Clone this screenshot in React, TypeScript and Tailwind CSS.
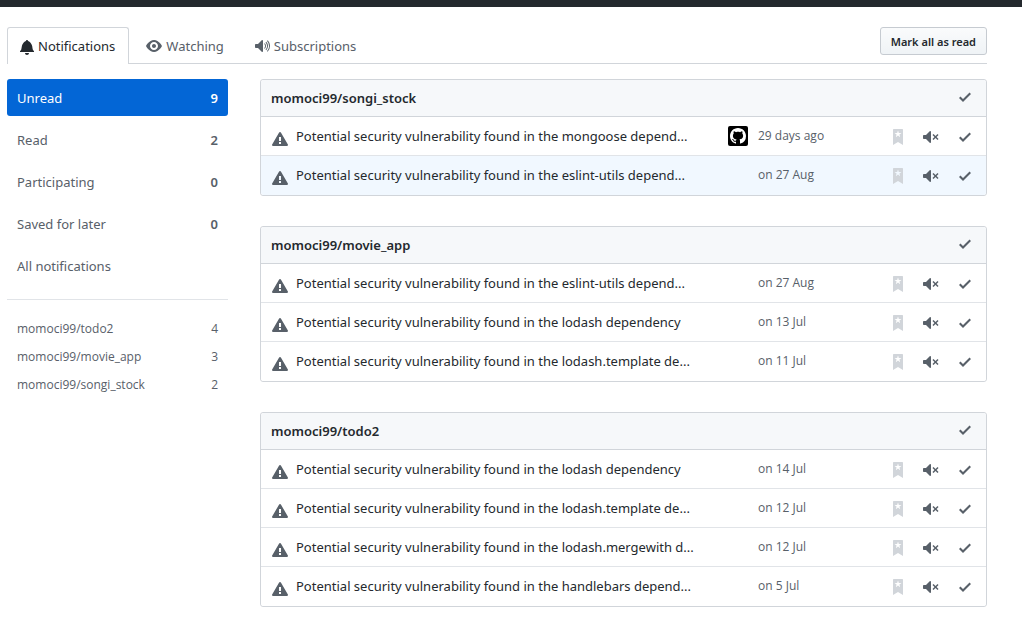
import type { ReactNode } from "react";

type Glyph = { width: number; path: string };

const glyphs = {
  bell: {
    width: 14,
    path: "M14 12v1H0v-1l.73-.58c.77-.77.81-2.55 1.19-4.42C2.69 3.23 6 2 6 2c0-.55.45-1 1-1s1 .45 1 1c0 0 3.39 1.23 4.16 5 .38 1.88.42 3.66 1.19 4.42l.66.58H14zm-7 4c1.11 0 2-.89 2-2H5c0 1.11.89 2 2 2z",
  },
  eye: {
    width: 16,
    path: "M8.06 2C3 2 0 8 0 8s3 6 8.06 6C13 14 16 8 16 8s-3-6-7.94-6zM8 12c-2.2 0-4-1.78-4-4 0-2.2 1.8-4 4-4 2.22 0 4 1.8 4 4 0 2.22-1.78 4-4 4zm2-4c0 1.11-.89 2-2 2-1.11 0-2-.89-2-2 0-1.11.89-2 2-2 1.11 0 2 .89 2 2z",
  },
  unmute: {
    width: 16,
    path: "M12 8.02c0 1.09-.45 2.09-1.17 2.83l-.67-.67c.55-.56.89-1.31.89-2.16 0-.83-.34-1.59-.89-2.16l.67-.67A3.99 3.99 0 0 1 12 8.02zM7.72 2.28L4 6H2c-.55 0-1 .45-1 1v2c0 .55.45 1 1 1h2l3.72 3.72c.47.47 1.28.14 1.28-.53V2.81C9 2.14 8.19 1.81 7.72 2.28zm5.94.08l-.67.67a6.996 6.996 0 0 1 2.06 4.98c0 1.94-.78 3.7-2.06 4.98l.67.67A7.973 7.973 0 0 0 16 8c0-2.22-.89-4.22-2.34-5.66v.02zm-1.41 1.41l-.69.67a5.05 5.05 0 0 1 1.48 3.58c0 1.39-.56 2.66-1.48 3.56l.69.67A5.971 5.971 0 0 0 14 8c0-1.65-.67-3.16-1.75-4.23z",
  },
  mute: {
    width: 16,
    path: "M8 2.81v10.38c0 .67-.81 1-1.28.53L3 10H1c-.55 0-1-.45-1-1V7c0-.55.45-1 1-1h2l3.72-3.72C7.19 1.81 8 2.14 8 2.81zm7.53 3.22l-1.06-1.06-1.97 1.97-1.97-1.97-1.06 1.06L11.44 8 9.47 9.97l1.06 1.06 1.97-1.97 1.97 1.97 1.06-1.06L13.56 8l1.97-1.97z",
  },
  check: { width: 12, path: "M12 5l-8 8-4-4 1.5-1.5L4 10l6.5-6.5L12 5z" },
  alert: {
    width: 16,
    path: "M8.893 1.5c-.183-.31-.52-.5-.887-.5s-.703.19-.886.5L.138 13.499a.98.98 0 0 0 0 1.001c.193.31.53.501.886.501h13.964c.367 0 .704-.19.877-.5a1.03 1.03 0 0 0 .01-1.002L8.893 1.5zm.133 11.497H6.987v-2.003h2.039v2.003zm0-3.004H6.987V5.987h2.039v4.006z",
  },
  bookmark: {
    width: 10,
    path: "M9 0H1C.27 0 0 .27 0 1v15l5-3.09L10 16V1c0-.73-.27-1-1-1zm-.78 4.25L6.36 5.61l.72 2.16c.06.22-.02.28-.2.17L5 6.6 3.12 7.94c-.19.11-.25.05-.2-.17l.72-2.16-1.86-1.36c-.17-.16-.14-.23.09-.23l2.3-.03.7-2.16h.25l.7 2.16 2.3.03c.23 0 .27.08.09.23h.01z",
  },
} satisfies Record<string, Glyph>;

function Icon({ name, className = "" }: { name: keyof typeof glyphs; className?: string }) {
  const { width, path } = glyphs[name];
  return (
    <svg
      width={width}
      height={16}
      viewBox={`0 0 ${width} 16`}
      fill="currentColor"
      fillRule="evenodd"
      aria-hidden="true"
      className={`shrink-0 ${className}`}
    >
      <path d={path} />
    </svg>
  );
}

function GitHubAvatar() {
  return (
    <svg width={20} height={20} viewBox="0 0 20 20" role="img" aria-label="github" className="shrink-0">
      <rect width={20} height={20} rx={2} fill="#000" />
      <path
        transform="translate(2 2)"
        fill="#fff"
        fillRule="evenodd"
        d="M8 0C3.58 0 0 3.58 0 8c0 3.54 2.29 6.53 5.47 7.59.4.07.55-.17.55-.38 0-.19-.01-.82-.01-1.49-2.01.37-2.53-.49-2.69-.94-.09-.23-.48-.94-.82-1.13-.28-.15-.68-.52-.01-.53.63-.01 1.08.58 1.23.82.72 1.21 1.87.87 2.33.66.07-.52.28-.87.51-1.07-1.78-.2-3.64-.89-3.64-3.95 0-.87.31-1.59.82-2.15-.08-.2-.36-1.02.08-2.12 0 0 .67-.21 2.2.82.64-.18 1.32-.27 2-.27.68 0 1.36.09 2 .27 1.53-1.04 2.2-.82 2.2-.82.44 1.1.16 1.92.08 2.12.51.56.82 1.27.82 2.15 0 3.07-1.87 3.75-3.65 3.95.29.25.54.73.54 1.48 0 1.07-.01 1.93-.01 2.2 0 .21.15.46.55.38A8.013 8.013 0 0 0 16 8c0-4.42-3.58-8-8-8z"
      />
    </svg>
  );
}

const filters = [
  { label: "Unread", count: 9, selected: true },
  { label: "Read", count: 2 },
  { label: "Participating", count: 0 },
  { label: "Saved for later", count: 0 },
  { label: "All notifications" },
];

const repositories = [
  { label: "momoci99/todo2", count: 4 },
  { label: "momoci99/movie_app", count: 3 },
  { label: "momoci99/songi_stock", count: 2 },
];

type Notification = { subject: string; date: string; avatar?: boolean; highlighted?: boolean };

const found = "Potential security vulnerability found in the ";

const groups: { repo: string; items: Notification[] }[] = [
  {
    repo: "momoci99/songi_stock",
    items: [
      { subject: "mongoose depend...", date: "29 days ago", avatar: true },
      { subject: "eslint-utils depend...", date: "on 27 Aug", highlighted: true },
    ],
  },
  {
    repo: "momoci99/movie_app",
    items: [
      { subject: "eslint-utils depend...", date: "on 27 Aug" },
      { subject: "lodash dependency", date: "on 13 Jul" },
      { subject: "lodash.template de...", date: "on 11 Jul" },
    ],
  },
  {
    repo: "momoci99/todo2",
    items: [
      { subject: "lodash dependency", date: "on 14 Jul" },
      { subject: "lodash.template de...", date: "on 12 Jul" },
      { subject: "lodash.mergewith d...", date: "on 12 Jul" },
      { subject: "handlebars depend...", date: "on 5 Jul" },
    ],
  },
];

function IconButton({ label, className = "", children }: { label: string; className?: string; children: ReactNode }) {
  return (
    <button type="button" aria-label={label} className={`flex items-center justify-center ${className}`}>
      {children}
    </button>
  );
}

function NotificationRow({ item }: { item: Notification }) {
  return (
    <li
      className={`flex h-[39px] items-start border-b border-[#e1e4e8] pt-[9px] pr-[15px] pl-[11px] last:rounded-b-[3px] last:border-b-0 ${
        item.highlighted ? "bg-[#f1f8ff]" : "bg-white"
      }`}
    >
      <a href="#notification" className="flex min-w-0 flex-1 gap-2 text-[#24292e]">
        <Icon name="alert" className="mt-[5px] text-[#586069]" />
        <span className="truncate">{found + item.subject}</span>
      </a>
      <div className="flex w-[30px] shrink-0">{item.avatar && <GitHubAvatar />}</div>
      <time className="w-[135px] shrink-0 font-['Open_Sans','Noto_Sans',sans-serif] text-xs leading-5 text-[#586069]">
        {item.date}
      </time>
      <div className="flex shrink-0 pt-[1px] text-[#586069]">
        <IconButton label="Save for later" className="h-5 w-[10px] text-[#d1d5da]">
          <Icon name="bookmark" />
        </IconButton>
        <IconButton label="Unsubscribe" className="ml-5 h-5 w-4">
          <Icon name="mute" />
        </IconButton>
        <IconButton label="Mark as read" className="ml-5 h-5 w-3">
          <Icon name="check" />
        </IconButton>
      </div>
    </li>
  );
}

export default function App() {
  return (
    <div className="min-h-screen bg-white font-['Noto_Sans','Open_Sans',sans-serif] text-[13px] leading-5 text-[#24292e]">
      <header className="h-[7px] bg-[#24292e]" />
      <main className="mr-[35px] ml-[7px] pt-5 pb-8">
        <div className="flex items-start justify-between border-b border-[#d1d5da]">
          <nav aria-label="Notification views" className="-mb-px flex h-[37px] text-[#586069]">
            <a
              href="#notifications"
              aria-current="page"
              className="flex items-center gap-1 rounded-t-[3px] border border-b-0 border-[#d1d5da] bg-white pr-[13px] pl-3 text-[#24292e]"
            >
              <Icon name="bell" className="mt-px" />
              Notifications
            </a>
            <a href="#watching" className="flex items-center gap-1 pr-[13px] pl-[17px]">
              <Icon name="eye" className="mt-px" />
              Watching
            </a>
            <a href="#subscriptions" className="flex items-center gap-1 pr-[13px] pl-[17px]">
              <Icon name="unmute" className="mt-px" />
              Subscriptions
            </a>
          </nav>
          <button
            type="button"
            className="h-7 rounded-[3px] border border-[#c6cbd1] bg-linear-to-b from-[#fafbfc] to-[#eff3f6] px-[10px] pt-0.5 text-[11px] font-semibold"
          >
            Mark all as read
          </button>
        </div>

        <div className="mt-[15px] flex items-start gap-8">
          <aside className="w-[221px] shrink-0 text-[#586069]">
            <ul className="flex flex-col gap-[5px]">
              {filters.map((f) => (
                <li key={f.label}>
                  <a
                    href="#filter"
                    className={`flex h-[37px] items-center justify-between rounded-[3px] px-[10px] ${
                      f.selected ? "bg-[#0366d6] text-white" : ""
                    }`}
                  >
                    {f.label}
                    <span className="font-semibold">{f.count}</span>
                  </a>
                </li>
              ))}
            </ul>
            <hr className="my-[15px] border-[#e1e4e8]" />
            <ul className="font-['Open_Sans','Noto_Sans',sans-serif] text-xs">
              {repositories.map((r) => (
                <li key={r.label}>
                  <a href="#repository" className="flex h-7 items-center justify-between px-[10px]">
                    {r.label}
                    <span className="font-medium">{r.count}</span>
                  </a>
                </li>
              ))}
            </ul>
          </aside>

          <div className="flex min-w-0 flex-1 flex-col gap-[30px]">
            {groups.map((g) => (
              <section key={g.repo} className="rounded-[3px] border border-[#d1d5da]">
                <div className="flex h-[37px] items-start justify-between rounded-t-[3px] border-b border-[#d1d5da] bg-[#f6f8fa] pt-2 pr-[15px] pl-[10px]">
                  <h2 className="font-semibold">
                    <a href="#repository">{g.repo}</a>
                  </h2>
                  <IconButton label={`Mark all ${g.repo} notifications as read`} className="h-[18px] w-3 text-[#586069]">
                    <Icon name="check" />
                  </IconButton>
                </div>
                <ul>
                  {g.items.map((item) => (
                    <NotificationRow key={item.subject} item={item} />
                  ))}
                </ul>
              </section>
            ))}
          </div>
        </div>
      </main>
    </div>
  );
}
